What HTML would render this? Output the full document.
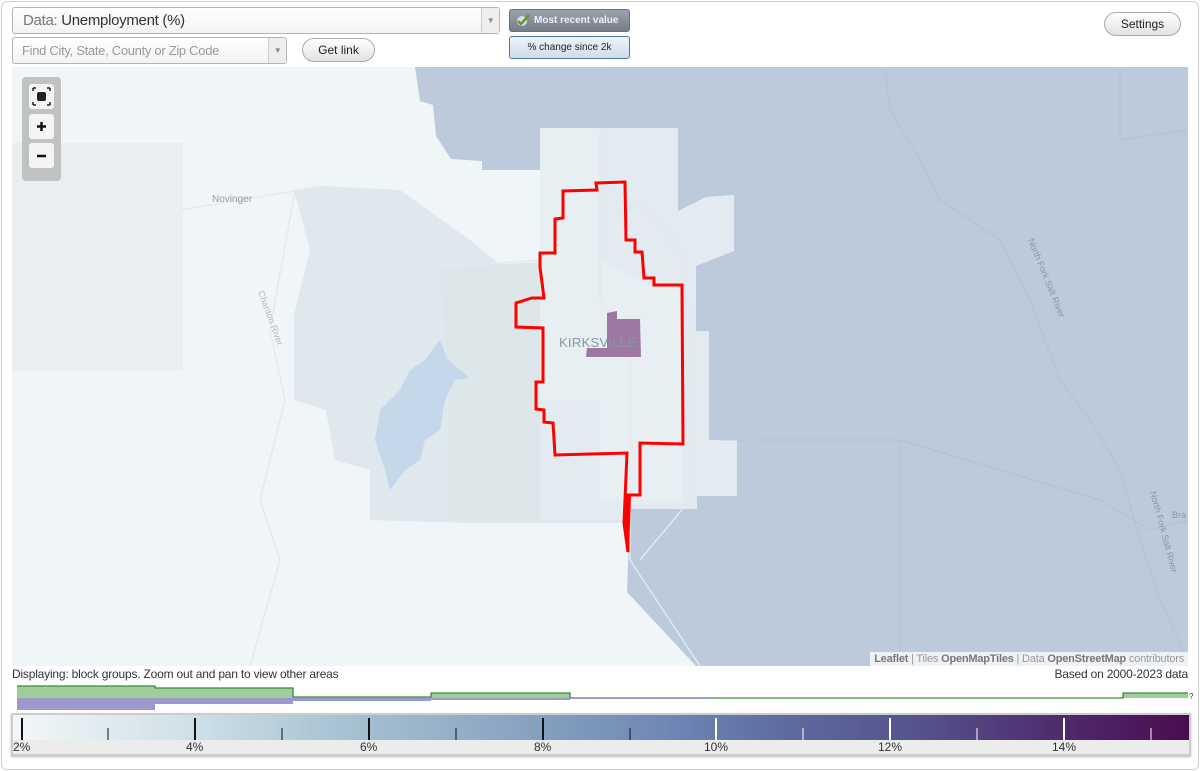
<!DOCTYPE html>
<html><head><meta charset="utf-8"><style>
*{box-sizing:border-box}
body{margin:0;width:1200px;height:771px;background:#fff;font-family:"Liberation Sans",sans-serif;position:relative;overflow:hidden}
.frame{position:absolute;left:1px;top:1px;width:1198px;height:769px;border:1px solid #cfcfcf;border-radius:6px}
.sel{position:absolute;border:1px solid #b5b5b5;border-radius:3px;background:linear-gradient(#fff,#f3f3f3);font-size:14px;color:#333}
.sel .arr{position:absolute;right:0;top:0;bottom:0;width:18px;border-left:1px solid #ccc;background:#eee;color:#888;font-size:8px;text-align:center}
.btn{position:absolute;border:1px solid #aaa;border-radius:12px;background:linear-gradient(#fff,#e2e2e2);font-size:12px;text-align:center;color:#222}
.attr{position:absolute;right:12px;top:652px;background:rgba(255,255,255,.75);font-size:11px;color:#999;padding:1px 4px;height:14px;letter-spacing:-.2px}
.attr b{color:#777;font-weight:bold}
</style></head><body>
<div class="frame"></div>
<div class="sel" style="left:12px;top:7px;width:488px;height:27px;padding:4px 10px;font-size:15px;letter-spacing:-.3px"><span style="color:#777">Data:</span> Unemployment (%)<div class="arr" style="line-height:25px">▼</div></div>
<div class="sel" style="left:12px;top:37px;width:275px;height:27px;padding:5px 9px;font-size:13px;color:#999;letter-spacing:-.3px">Find City, State, County or Zip Code<div class="arr" style="line-height:25px">▼</div></div>
<div class="btn" style="left:302px;top:38px;width:73px;height:24px;line-height:22px">Get link</div>
<div style="position:absolute;left:509px;top:9px;width:121px;height:23px;border:1px solid #4a76a8;border-radius:3px;background:linear-gradient(#9aa3ad,#747d88);color:#eef;font-size:10px;font-weight:bold;line-height:21px;padding-left:24px">Most recent value
<svg style="position:absolute;left:6px;top:4px" width="14" height="13" viewBox="0 0 14 13"><circle cx="6" cy="7" r="5" fill="#dde"/><path d="M2 7l3 3 8-9" stroke="#5c9c2c" stroke-width="2.5" fill="none"/></svg></div>
<div style="position:absolute;left:509px;top:36px;width:121px;height:23px;border:1px solid #4a76a8;border-radius:3px;background:linear-gradient(#eef4fa,#cfdceb);color:#222;font-size:10px;line-height:21px;text-align:center">% change since 2k</div>
<div class="btn" style="left:1104px;top:12px;width:77px;height:24px;line-height:22px">Settings</div>

<svg style="position:absolute;left:12px;top:67px" width="1176" height="599" viewBox="12 67 1176 599">
<rect x="12" y="67" width="1176" height="599" fill="#f0f5f7"/>
<rect x="12" y="143" width="171" height="227" fill="#e9eff1"/>
<path d="M294 190 L320 186 L400 190 L470 240 L500 265 L540 265 L630 265 L630 523 L470 523 L370 520 L370 470 L335 460 L326 410 L294 400 L294 315 L310 250 Z" fill="#dfe8ec"/>
<path d="M440 268 L540 262 L630 262 L630 520 L450 520 L450 400 L445 330 Z" fill="#dde7ea"/>
<path d="M540 128 L678 128 L678 211 L706 197 L734 195 L734 251 L696 266 L696 331 L709 331 L709 440 L737 440 L737 496 L697 496 L697 509 L630 509 L630 520 L540 520 Z" fill="#e3ebf0"/>
<path d="M540 128 L600 128 L600 260 L650 285 L682 285 L682 500 L600 500 L600 400 L540 400 Z" fill="#e8eff3"/>
<path d="M415 67 L1188 67 L1188 666 L696 666 L627 592 L630 509 L697 509 L697 496 L737 496 L737 440 L709 440 L709 331 L696 331 L696 266 L734 251 L734 195 L706 197 L678 211 L678 128 L540 128 L540 170 L482 170 L482 161 L451 159 L436 136 L433 105 L420 101 Z" fill="#bdcadb"/>
<g stroke="#b0bdcc" stroke-width="1" fill="none" opacity=".7">
<path d="M885 67 L890 110 L920 160 L940 200 L1000 240 L1030 300 L1060 380 L1090 420 L1120 470 L1140 540 L1160 600 L1188 660"/>
<path d="M720 440 L900 440 L1000 470 L1100 500 L1150 530 L1188 520"/>
<path d="M1120 67 L1120 140 L1188 130"/>
<path d="M900 440 L900 666"/>
</g>
<g stroke="#e3e9ed" stroke-width="1.5" fill="none">
<path d="M180 210 L300 190 L330 188 L440 268 L540 260"/>
<path d="M295 190 L270 330 L285 400 L260 500 L280 560 L250 666"/>
<path d="M600 130 L600 300 L630 340 L630 560 L700 666"/>
<path d="M640 200 L680 250 L690 330 L690 500 L640 560"/>
</g>
<path d="M440 340 L448 360 L470 378 L455 380 L445 400 L440 430 L425 440 L420 460 L405 470 L390 490 L385 470 L375 440 L380 410 L390 400 L400 390 L410 370 L425 360 Z" fill="#c4d8ea"/>
<text x="212" y="202" font-size="10" fill="#99a">Novinger</text>
<text x="1028" y="240" font-size="9" fill="#8896a8" transform="rotate(68 1028 240)">North Fork Salt River</text>
<text x="1150" y="492" font-size="9" fill="#8896a8" transform="rotate(75 1150 492)">North Fork Salt River</text>
<text x="1172" y="518" font-size="9" fill="#8896a8">Bra</text>
<text x="258" y="292" font-size="9" fill="#b0b8c0" transform="rotate(70 258 292)">Chariton River</text>
<path d="M607 313 L617 311 L617 319 L640 319 L641 357 L586 357 L587 348 L607 348 Z" fill="#8a5a8c" opacity=".8"/>
<text x="559" y="347" font-size="13" fill="#8a96a8" letter-spacing=".3">KIRKSVILLE</text>
<path d="M596 183 L625 182 L626 240 L635 240 L635 252 L642 252 L644 278 L654 278 L654 285 L682 285 L683 444 L640 443 L640 495 L628 495 L628 552 L624 523 L627 453 L555 455 L553 423 L544 422 L544 410 L536 409 L536 382 L543 382 L543 328 L516 327 L516 303 L532 298 L544 298 L540 267 L540 253 L555 253 L555 219 L563 218 L563 191 L597 190 Z" fill="none" stroke="#f00" stroke-width="3"/>
<path d="M626 495 L631 495 L629 553 L623 525 Z" fill="#f00"/>
<rect x="22" y="77" width="39" height="104" rx="4" fill="#b8b8b8" opacity=".85"/>
<rect x="29" y="84" width="25" height="25" rx="3" fill="#f4f4f4"/>
<rect x="29" y="114" width="25" height="25" rx="3" fill="#f4f4f4"/>
<rect x="29" y="143" width="25" height="25" rx="3" fill="#f4f4f4"/>
<rect x="37" y="92" width="9" height="9" rx="2" fill="#222"/>
<path d="M33 88h3M33 88v3M50 88h-3M50 88v3M33 105h3M33 105v-3M50 105h-3M50 105v-3" stroke="#222" stroke-width="1.5"/>
<path d="M37 126.5h9M41.5 122v9" stroke="#111" stroke-width="2.5"/>
<path d="M37 156h9" stroke="#111" stroke-width="2.5"/>
</svg>
<div class="attr"><b>Leaflet</b> | Tiles <b>OpenMapTiles</b> | Data <b>OpenStreetMap</b> contributors</div>
<div style="position:absolute;left:12px;top:667px;font-size:12px;color:#333;letter-spacing:-.2px">Displaying: block groups. Zoom out and pan to view other areas</div>
<div style="position:absolute;right:12px;top:667px;font-size:12px;color:#333;letter-spacing:-.2px">Based on 2000-2023 data</div>
<svg style="position:absolute;left:0;top:680px" width="1200" height="34">
<path d="M17 18V6H155V8H293V17H431V13H570V18H1123V13H1188V18Z" fill="#9fce9a"/>
<path d="M17 6H155V8H293V17H431V13H570V18H1123V13H1188" fill="none" stroke="#3a8a3a" stroke-width="1.3"/>
<path d="M17 18H708V19H570V20H431V21H293V24H155V30H17Z" fill="#9c9acc"/>
<text x="1189" y="19" font-size="8" fill="#333">?</text>
</svg>
<div style="position:absolute;left:11px;top:713px;width:1180px;height:43px;border:2px solid #ccc;background:#ececec;box-shadow:0 1px 2px #bbb"></div>
<div style="position:absolute;left:13px;top:715px;width:1176px;height:25px;background:linear-gradient(90deg,#f3f7f9 0%,#cfe0e7 15%,#a8c2d2 28%,#89a4c2 43%,#7089b5 55%,#5e6a9f 66%,#54508a 78%,#4f2e6e 88%,#4a0c50 100%)"></div>
<svg style="position:absolute;left:0;top:715px" width="1200" height="40">
<g stroke="#111" stroke-width="2"><path d="M22 3V25M195 3V25M369 3V25M543 3V25"/></g>
<g stroke="#111" stroke-width="1"><path d="M108 13V25M282 13V25M456 13V25M630 13V25"/></g>
<g stroke="#fff" stroke-width="2"><path d="M716 3V25M890 3V25M1064 3V25"/></g>
<g stroke="#fff" stroke-width="1"><path d="M803 13V25M977 13V25M1151 13V25"/></g>
<g font-size="12" fill="#333" font-family="Liberation Sans"><text x="13" y="36">2%</text><text x="186" y="36">4%</text><text x="360" y="36">6%</text><text x="534" y="36">8%</text><text x="704" y="36">10%</text><text x="878" y="36">12%</text><text x="1052" y="36">14%</text></g>
</svg>
</body></html>
